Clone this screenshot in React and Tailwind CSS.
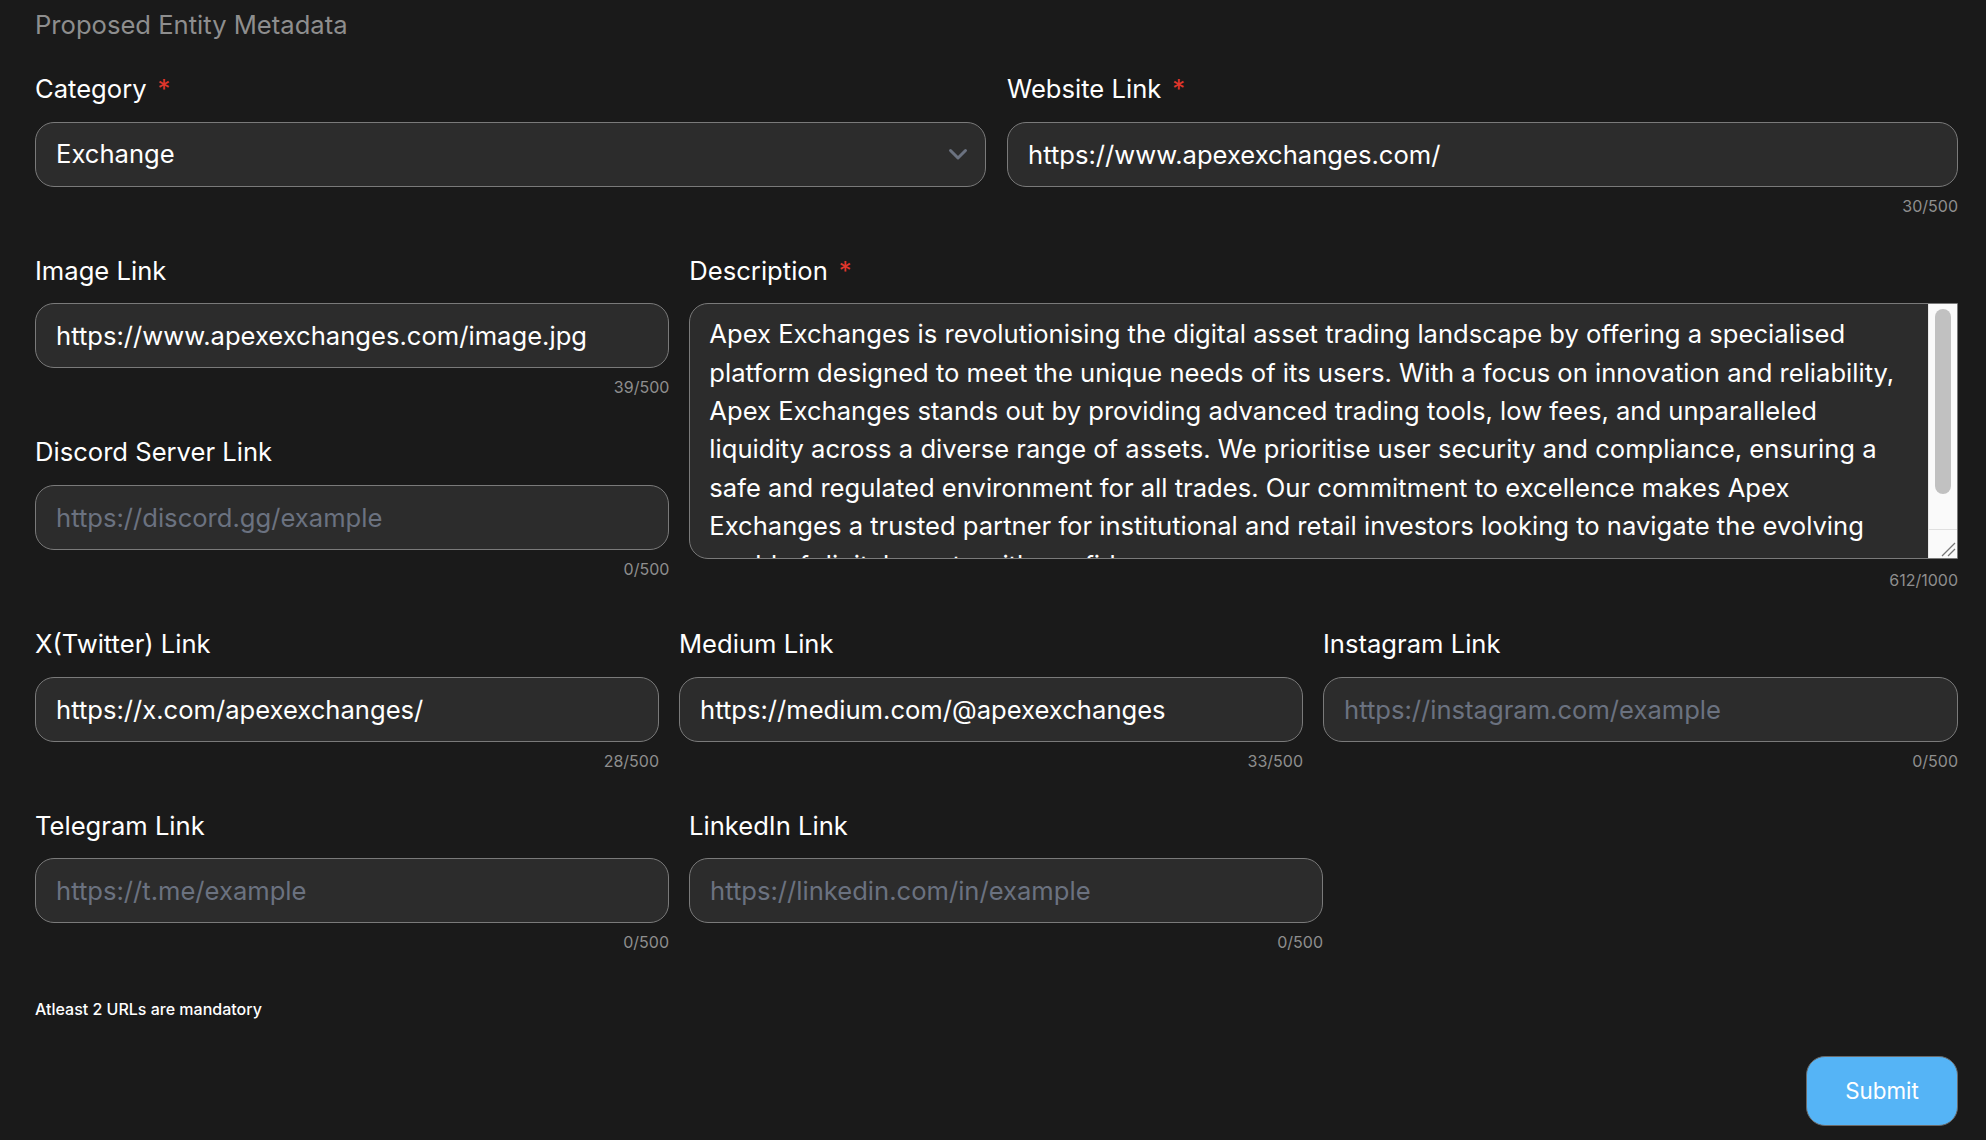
import React from "react";

const DESCRIPTION =
    "Apex Exchanges is revolutionising the digital asset trading landscape by offering a specialised platform designed to meet the unique needs of its users. With a focus on innovation and reliability, Apex Exchanges stands out by providing advanced trading tools, low fees, and unparalleled liquidity across a diverse range of assets. We prioritise user security and compliance, ensuring a safe and regulated environment for all trades. Our commitment to excellence makes Apex Exchanges a trusted partner for institutional and retail investors looking to navigate the evolving world of digital assets with confidence.";

const Label = ({ children, required }) => (
    <div className="text-[25.6px] leading-[38.4px] text-white">
        {children}
        {required && <span className="ml-[11px] text-[#e0362c]">*</span>}
    </div>
);

const Counter = ({ children, top = "mt-[7px]" }) => (
    <div className={`${top} text-right text-[16px] leading-[24px] text-[#8e8e8e]`}>{children}</div>
);

const TextField = ({ label, value, placeholder, count, required }) => (
    <div className="flex flex-col">
        <Label required={required}>{label}</Label>
        <input
            readOnly
            defaultValue={value}
            placeholder={placeholder}
            className="mt-[13px] h-[65px] w-full rounded-[19px] border border-[#7a7a7a] bg-[#2c2c2c] px-[20px] text-[25.6px] text-white outline-none placeholder:text-[#6b7280]"
        />
        <Counter>{count}</Counter>
    </div>
);

export default function App() {
    return (
        <div className="min-h-[1140px] bg-[#1a1a1a] pl-[35px] pr-[28px] pt-[6px] pb-[15px] font-['Inter','Liberation_Sans',sans-serif]">
            <div className="text-[25.6px] leading-[38.4px] text-[#8e8e8e]">Proposed Entity Metadata</div>

            {/* Category + website */}
            <div className="mt-[26px] grid grid-cols-2 gap-x-[21px]">
                <div className="flex flex-col">
                    <Label required>Category</Label>
                    <div className="mt-[13px] flex h-[65px] items-center justify-between rounded-[19px] border border-[#7a7a7a] bg-[#2c2c2c] pl-[20px] pr-[17px] text-[25.6px] text-white">
                        <span>Exchange</span>
                        <svg width="20" height="13" viewBox="0 0 20 13" fill="none">
                            <polyline points="2.5,2.5 10,10 17.5,2.5" stroke="#6b7280" strokeWidth="3" strokeLinecap="round" strokeLinejoin="round" />
                        </svg>
                    </div>
                </div>
                <TextField label="Website Link" required value="https://www.apexexchanges.com/" count="30/500" />
            </div>

            {/* Image / discord + description */}
            <div className="mt-[34px] grid grid-cols-[1fr_2fr] gap-x-[20px]">
                <div className="flex flex-col gap-[34px]">
                    <TextField label="Image Link" value="https://www.apexexchanges.com/image.jpg" count="39/500" />
                    <TextField label="Discord Server Link" placeholder="https://discord.gg/example" count="0/500" />
                </div>
                <div className="flex flex-col">
                    <Label required>Description</Label>
                    <div className="mt-[13px] flex h-[256px] overflow-hidden rounded-l-[19px] border border-[#7a7a7a] bg-[#2c2c2c]">
                        <div className="flex-1 overflow-hidden pl-[19px] pr-[20px] pt-[11px] text-[25.6px] leading-[38.4px] text-white">
                            {DESCRIPTION}
                        </div>
                        <div className="flex w-[29px] flex-col border-l border-[#e8e8e8] bg-[#fafafa]">
                            <div className="flex-1 pt-[5px]">
                                <div className="mx-auto h-[185px] w-[16px] rounded-full bg-[#c1c1c1]" />
                            </div>
                            <div className="flex h-[29px] items-end justify-end border-t border-[#e0e0e0] p-[1px]">
                                <svg width="15" height="15" viewBox="0 0 15 15">
                                    <line x1="1" y1="14" x2="14" y2="1" stroke="#777" strokeWidth="1.2" />
                                    <line x1="7" y1="14" x2="14" y2="7" stroke="#777" strokeWidth="1.2" />
                                </svg>
                            </div>
                        </div>
                    </div>
                    <Counter top="mt-[9px]">612/1000</Counter>
                </div>
            </div>

            {/* Social links */}
            <div className="mt-[33px] grid grid-cols-[624px_624px_1fr] gap-x-[20px]">
                <TextField label="X(Twitter) Link" value="https://x.com/apexexchanges/" count="28/500" />
                <TextField label="Medium Link" value="https://medium.com/@apexexchanges" count="33/500" />
                <TextField label="Instagram Link" placeholder="https://instagram.com/example" count="0/500" />
            </div>

            <div className="mt-[34px] grid grid-cols-[634px_634px] gap-x-[20px]">
                <TextField label="Telegram Link" placeholder="https://t.me/example" count="0/500" />
                <TextField label="LinkedIn Link" placeholder="https://linkedin.com/in/example" count="0/500" />
            </div>

            <div className="mt-[43px] text-[16px] font-medium leading-[24px] text-white">Atleast 2 URLs are mandatory</div>

            <div className="mt-[35px] flex justify-end">
                <button className="h-[70px] w-[152px] rounded-[19px] border border-[#6a6a6a] bg-[#55b4f6] text-[22.4px] text-white">
                    Submit
                </button>
            </div>
        </div>
    );
}
